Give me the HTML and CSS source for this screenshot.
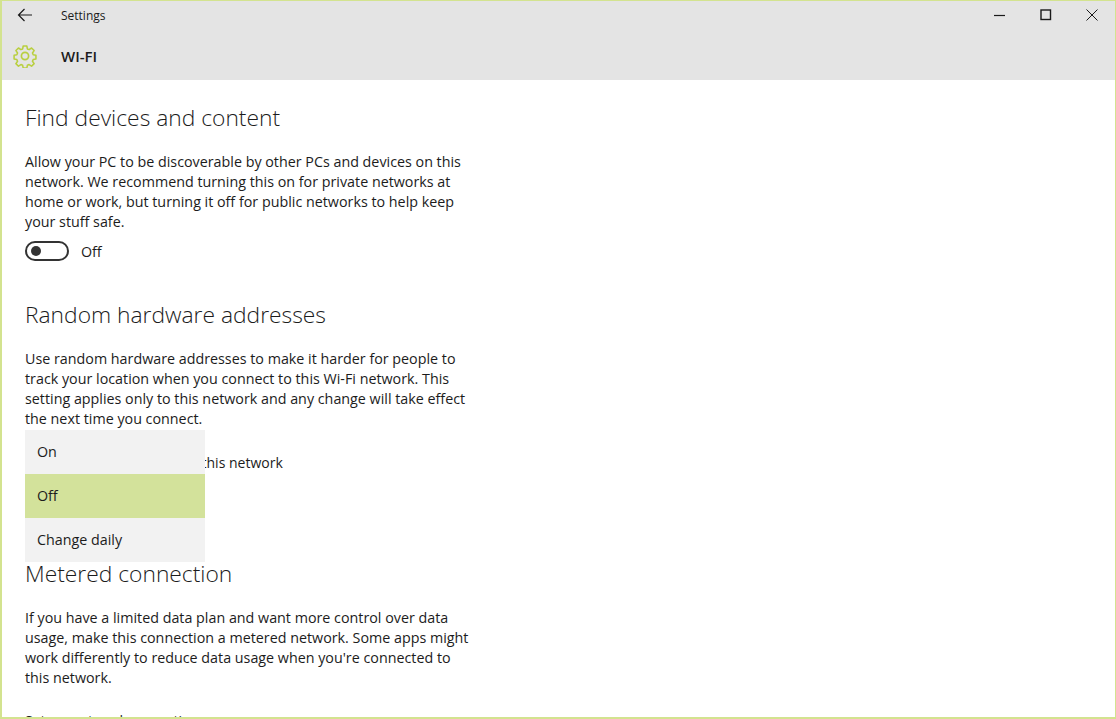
FILE: index.html
```html
<!DOCTYPE html>
<html lang="en">
<head>
    <meta charset="UTF-8">
    <meta name="viewport" content="width=device-width, initial-scale=1.0">
    <title>Settings</title>
    <link rel="stylesheet" href="styles.css">
</head>
<body>
    <div class="window">
        <div class="header">
            <div class="title-bar">
                <button class="back-button" aria-label="Back">
                    <svg width="16" height="14" viewBox="0 0 16 14" fill="none" stroke="#1a1a1a" stroke-width="1.2">
                        <path d="M15 7H1.5M7.5 1L1.5 7l6 6"/>
                    </svg>
                </button>
                <span class="app-name">Settings</span>
                <div class="window-controls">
                    <svg width="12" height="12" viewBox="0 0 12 12" fill="none" stroke="#1a1a1a" stroke-width="1.2"><path d="M0 6.5h11"/></svg>
                    <svg width="12" height="12" viewBox="0 0 12 12" fill="none" stroke="#1a1a1a" stroke-width="1.4"><rect x="1" y="1" width="9.5" height="9.5"/></svg>
                    <svg width="12" height="12" viewBox="0 0 12 12" fill="none" stroke="#1a1a1a" stroke-width="1"><path d="M.5.5l11 11M11.5.5l-11 11"/></svg>
                </div>
            </div>
            <div class="page-bar">
                <svg class="gear" width="24" height="24" viewBox="0 0 24 24" fill="none" stroke="#b9cf3f" stroke-width="1.7" stroke-linejoin="round">
                    <circle cx="12" cy="12" r="3.6"/>
                    <path d="M10 1h4l.6 3.2 1.9.8 2.7-1.8 2.8 2.8-1.8 2.7.8 1.9 3 .6v4l-3 .6-.8 1.9 1.8 2.7-2.8 2.8-2.7-1.8-1.9.8-.6 3h-4l-.6-3-1.9-.8-2.7 1.8-2.8-2.8 1.8-2.7-.8-1.9-3-.6v-4l3-.6.8-1.9-1.8-2.7 2.8-2.8 2.7 1.8 1.9-.8z" transform="translate(1.1 1.1) scale(.91)"/>
                </svg>
                <span class="page-name">WI-FI</span>
            </div>
        </div>

        <div class="content">
            <section class="find-section">
                <h2>Find devices and content</h2>
                <p>Allow your PC to be discoverable by other PCs and devices on this network. We recommend turning this on for private networks at home or work, but turning it off for public networks to help keep your stuff safe.</p>
                <div class="toggle-row">
                    <span class="toggle"><span class="toggle-knob"></span></span>
                    <span>Off</span>
                </div>
            </section>

            <section class="random-section">
                <h2>Random hardware addresses</h2>
                <p>Use random hardware addresses to make it harder for people to track your location when you connect to this Wi-Fi network. This setting applies only to this network and any change will take effect the next time you connect.</p>
                <div class="select-label">Use random addresses for this network</div>
                <ul class="dropdown">
                    <li>On</li>
                    <li class="selected">Off</li>
                    <li>Change daily</li>
                </ul>
            </section>

            <section class="metered-section">
                <h2>Metered connection</h2>
                <p>If you have a limited data plan and want more control over data usage, make this connection a metered network. Some apps might work differently to reduce data usage when you're connected to this network.</p>
                <div class="select-label metered-label">Set as metered connection</div>
            </section>
        </div>
    </div>
</body>
</html>
```

FILE: styles.css
```css
* {
    box-sizing: border-box;
}
body {
    margin: 0;
    font-family: "Open Sans", "Noto Sans", sans-serif;
    font-size: 14.3px;
    color: #1c1c1c;
    background-color: #fff;
}
.window {
    width: 1116px;
    height: 719px;
    border: 1px solid #d3e38f;
    border-width: 1px 1px 2px 2px;
    overflow: hidden;
    display: flex;
    flex-direction: column;
}
.header {
    height: 79px;
    flex-shrink: 0;
    background-color: #e4e4e4;
}
.title-bar {
    height: 28px;
    display: flex;
    align-items: center;
    font-size: 12px;
}
.back-button {
    width: 59px;
    padding: 0 0 0 15px;
    border: 0;
    background: none;
    display: flex;
    align-items: center;
}
.window-controls {
    margin-left: auto;
    margin-right: 17px;
    display: flex;
    gap: 34px;
}
.page-bar {
    height: 51px;
    display: flex;
    align-items: center;
    padding: 3px 0 0 11px;
}
.page-name {
    margin-left: 24px;
    font-size: 15px;
    font-weight: 600;
}
.content {
    flex: 1;
    padding-left: 23px;
    overflow: hidden;
}
section {
    position: relative;
    width: 448px;
}
h2 {
    margin: 0;
    font-size: 22.8px;
    font-weight: 300;
    line-height: 32px;
}
p {
    margin: 0;
    line-height: 20px;
}
.find-section {
    padding-top: 22px;
}
.find-section p {
    margin-top: 18px;
}
.toggle-row {
    display: flex;
    align-items: center;
    gap: 12px;
    margin-top: 9px;
    height: 20px;
}
.toggle {
    width: 44px;
    height: 20px;
    border: 2px solid #333;
    border-radius: 10px;
    display: flex;
    align-items: center;
    padding-left: 4px;
}
.toggle-knob {
    width: 10px;
    height: 10px;
    border-radius: 50%;
    background-color: #333;
}
.random-section {
    margin-top: 38px;
}
.random-section p {
    margin-top: 18px;
}
.select-label {
    margin-top: 24px;
    font-size: 14px;
    line-height: 20px;
}
.dropdown {
    position: absolute;
    left: 0;
    top: 131px;
    width: 180px;
    margin: 0;
    padding: 0;
    list-style: none;
    background-color: #f2f2f2;
}
.dropdown li {
    height: 44px;
    line-height: 44px;
    padding-left: 12px;
}
.dropdown .selected {
    background-color: #d3e29b;
}
.metered-section {
    margin-top: 85px;
}
.metered-section p {
    margin-top: 18px;
}
.metered-label {
    margin-top: 23px;
}
```
